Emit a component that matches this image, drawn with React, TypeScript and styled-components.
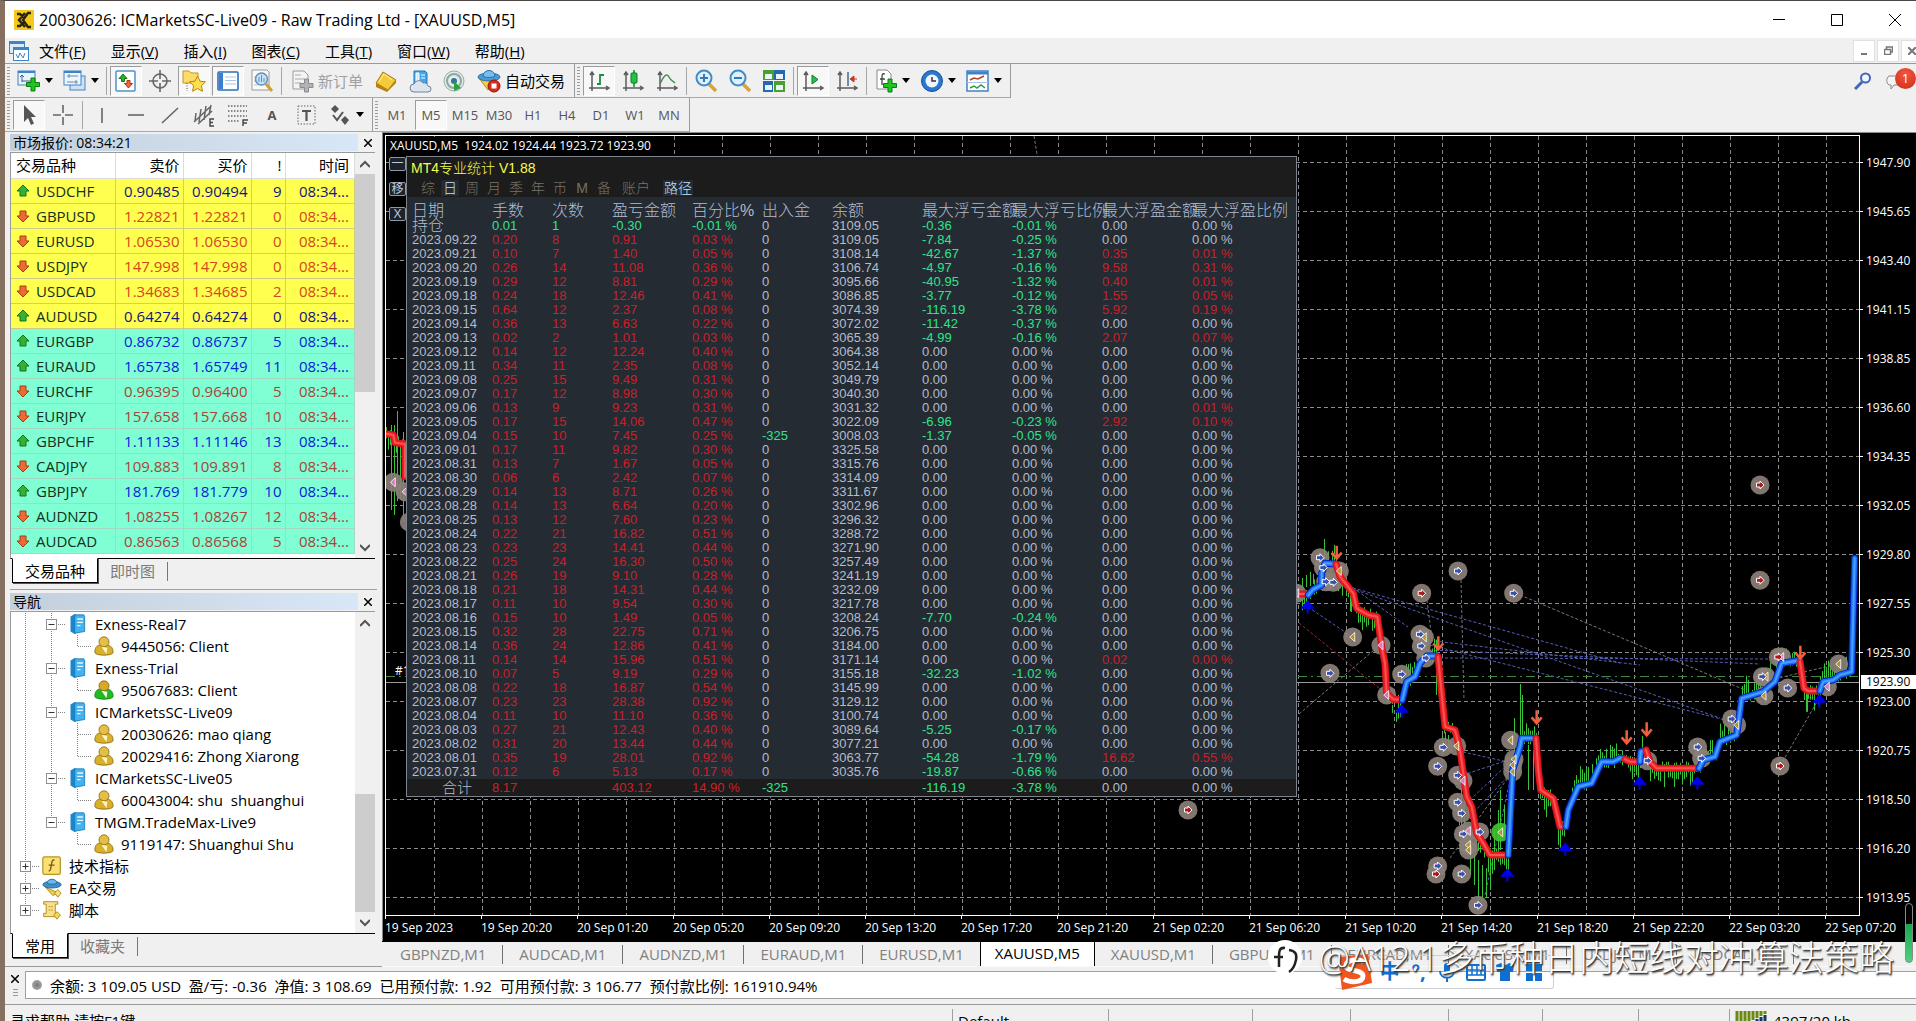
import React from "react";
import styled, { createGlobalStyle, css } from "styled-components";

const UI = `"Open Sans", "Noto Sans", "Noto Sans CJK SC", sans-serif`;
const PLAIN = `"Liberation Sans", "Noto Sans CJK SC", sans-serif`;

const Global = createGlobalStyle`
  *, *::before, *::after { box-sizing: border-box; }
  html, body { margin: 0; padding: 0; overflow: hidden; }
  body { font-family: ${UI}; font-size: 15px; color: #000; }
  button { font: inherit; color: inherit; background: none; border: 0; padding: 0; margin: 0; }
  a { color: inherit; text-decoration: none; }
  ul { list-style: none; margin: 0; padding: 0; }
  svg { display: block; flex: none; }
`;

/* ---------- window frame ---------- */

const Window = styled.div`
  position: relative;
  height: 100vh;
  display: flex;
  flex-direction: column;
  overflow: hidden;
  background: #f0f0f0;
  border-top: 1px solid #4a4646;
  border-left: 5px solid #86705f;
`;

const TitleBar = styled.header`
  flex: none;
  height: 37px;
  display: flex;
  align-items: center;
  background: #fff;
  padding-left: 9px;
`;

const Title = styled.h1`
  flex: 1;
  margin: 0 0 0 5px;
  font-size: 16px;
  font-weight: 400;
  line-height: 24px;
`;

const WindowButton = styled.button`
  width: 58px;
  height: 36px;
  display: grid;
  place-items: center;
`;

const WindowButtons = styled.div`
  display: flex;
  margin-right: -8px;
`;

const MenuBar = styled.nav`
  flex: none;
  height: 26px;
  display: flex;
  align-items: center;
  gap: 25px;
  padding-left: 4px;
  border-bottom: 1px solid #9a9a9a;
`;

const MenuLink = styled.a`
  line-height: 22px;
  white-space: nowrap;
  &:first-of-type { margin-left: -15px; }
`;

const ChildButtons = styled.div`
  margin-left: auto;
  display: flex;
  gap: 2px;
  margin-right: -7px;
`;

const ChildButton = styled.button`
  width: 22px;
  height: 22px;
  display: grid;
  place-items: center;
  background: #fff;
  border: 1px solid #e0e0e0;
`;

/* ---------- tool bars ---------- */

const ToolRow = styled.div`
  flex: none;
  height: 34px;
  display: flex;
  align-items: stretch;
`;

const ToolGroup = styled.div`
  display: flex;
  align-items: center;
  height: 34px;
  padding: 0 3px 0 1px;
  border-right: 1px solid #9a9a9a;
  border-bottom: 1px solid #a8a8a8;
`;

const Grip = styled.span`
  width: 3px;
  height: 28px;
  margin: 0 2px 0 1px;
  background: repeating-linear-gradient(#9c9c9c 0 1px, transparent 1px 3px);
`;

const Divider = styled.span`
  width: 1px;
  height: 28px;
  margin: 0 2px;
  background: #a6a6a6;
`;

const ToolButton = styled.button<{ $on?: boolean }>`
  width: 32px;
  height: 30px;
  margin: 0 1px;
  display: grid;
  place-items: center;
  font-size: 13px;
  color: #555;
  ${(p) =>
    p.$on &&
    css`
      background: #f8f8f8;
      border: 1px solid #fff;
      border-top-color: #9c9c9c;
      border-left-color: #9c9c9c;
    `}
`;

const DropButton = styled.button`
  width: 46px;
  height: 30px;
  display: flex;
  align-items: center;
  justify-content: center;
  gap: 4px;
`;

const Caret = styled.span`
  border: 4px solid transparent;
  border-top: 5px solid #000;
  border-bottom: 0;
`;

const TextButton = styled.button<{ $off?: boolean }>`
  height: 30px;
  padding: 0 6px;
  display: flex;
  align-items: center;
  gap: 4px;
  white-space: nowrap;
  color: ${(p) => (p.$off ? "#a0a0a0" : "#000")};
`;

const ToolEnd = styled.div`
  margin-left: auto;
  display: flex;
  align-items: center;
  gap: 14px;
`;

const Alert = styled.button`
  display: flex;
  align-items: center;
`;

const Count = styled.span`
  width: 21px;
  height: 21px;
  margin: -6px 0 0 -9px;
  border-radius: 50%;
  background: radial-gradient(circle at 50% 30%, #f0583e, #cf2a17);
  color: #fff;
  font-size: 13px;
  line-height: 21px;
  text-align: center;
`;

/* ---------- docked panels ---------- */

const Body = styled.div`
  flex: 1;
  min-height: 0;
  display: flex;
`;

const Dock = styled.aside`
  flex: none;
  width: 377px;
  display: flex;
  flex-direction: column;
  gap: 4px;
  padding: 2px 5px 6px;
  border-bottom: 1px solid #9a9a9a;
`;

const Panel = styled.section<{ $grow?: boolean }>`
  ${(p) => (p.$grow ? "flex: 1; min-height: 0;" : "flex: none; height: 451px;")}
  display: flex;
  flex-direction: column;
  & + & { border-top: 1px solid #a0a0a0; padding-top: 3px; }
`;

const PanelHead = styled.div`
  flex: none;
  height: 17px;
  display: flex;
  align-items: stretch;
  margin-bottom: 1px;
`;

const PanelTitle = styled.h2`
  flex: 1;
  margin: 0;
  padding-left: 3px;
  font-size: 14px;
  font-weight: 400;
  line-height: 17px;
  background: linear-gradient(90deg, #c3cfdb, #d8e7f7);
`;

const CloseButton = styled.button`
  width: 19px;
  display: grid;
  place-items: center;
`;

const PanelBody = styled.div`
  flex: 1;
  min-height: 0;
  display: flex;
  margin-right: 2px;
  background: #fff;
  border: 1px solid #9a9a9a;
  border-right: 0;
  border-bottom-color: #000;
`;

const PanelContent = styled.div`
  flex: 1;
  min-width: 0;
  overflow: hidden;
`;

const ScrollColumn = styled.div`
  width: 20px;
  flex: none;
  display: flex;
  flex-direction: column;
  background: #f0f0f0;
`;

const ScrollArrow = styled.button`
  height: 21px;
  display: grid;
  place-items: center;
`;

const Space = styled.div<{ $part: number; $thumb?: boolean }>`
  flex: ${(p) => p.$part};
  background: ${(p) => (p.$thumb ? "#cdcdcd" : "transparent")};
`;

const PanelTabs = styled.div`
  flex: none;
  height: 26px;
  display: flex;
  align-items: flex-start;
  padding-left: 2px;
`;

const PanelTab = styled.button<{ $on?: boolean }>`
  height: 25px;
  padding: 0 12px;
  line-height: 22px;
  color: ${(p) => (p.$on ? "#000" : "#7a7a7a")};
  ${(p) =>
    p.$on
      ? css`
          margin-top: -1px;
          background: #fff;
          border: 1px solid #000;
          border-top-color: #fff;
          box-shadow: 1px 1px 0 #555;
        `
      : css`
          height: 19px;
          margin-top: 3px;
          line-height: 17px;
          border-right: 1px solid #777;
        `}
`;

const Quotes = styled.table`
  width: 100%;
  border-collapse: collapse;
  table-layout: fixed;
  th, td {
    height: 25px;
    padding: 0 3px;
    line-height: 20px;
    text-align: right;
    font-weight: 400;
    white-space: nowrap;
    border-right: 1px solid #c6c6b0;
    border-bottom: 1px solid #c4c4a8;
  }
  th { border-color: #dcdcdc; }
  th:last-child, td:last-child { padding-right: 5px; }
  th:first-child, td:first-child { text-align: left; padding-left: 5px; }
`;

const QuoteRow = styled.tr<{ $up: boolean; $major: boolean }>`
  background: ${(p) => (p.$major ? "#ffff50" : "#80ffd4")};
  color: ${(p) => (p.$up ? (p.$major ? "#15157c" : "#0a22d8") : p.$major ? "#d2481c" : "#a8443a")};
  td { border-color: ${(p) => (p.$major ? "#cccc86" : "#a2d8c4")}; }
`;

const Symbol = styled.span`
  display: flex;
  align-items: center;
  gap: 6px;
  color: #14301c;
`;

const Tree = styled.ul`
  padding: 1px 0 0 2px;
`;

const TreeRow = styled.li`
  height: 22px;
  display: flex;
  align-items: center;
  white-space: pre;
`;

const TreeIcon = styled.span`
  width: 26px;
  display: grid;
  place-items: center;
`;

const TreeLabel = styled.a`
  padding-left: 4px;
  line-height: 22px;
`;

/* ---------- chart ---------- */

const Workspace = styled.main`
  flex: 1;
  min-width: 0;
  display: flex;
  flex-direction: column;
`;

const ChartWindow = styled.div`
  flex: 1;
  min-height: 0;
  display: grid;
  grid-template-columns: minmax(0, 1fr) 56px;
  grid-template-rows: minmax(0, 1fr) 25px;
  background: #000;
  color: #fff;
  padding: 2px 0 0 2px;
  border-top: 1px solid #8a8a8a;
  border-left: 1px solid #8a8a8a;
  font-size: 12px;
`;

const Plot = styled.div`
  position: relative;
  border: 1px solid #fff;
  overflow: hidden;
`;

const PlotCanvas = styled.svg`
  position: absolute;
  inset: 0;
  width: 100%;
  height: 100%;
`;

const PlotCaption = styled.div`
  position: absolute;
  left: 4px;
  top: 1px;
  line-height: 17px;
  white-space: pre;
  background: #000;
  font-size: 12px;
`;

const OrderTag = styled.span`
  position: absolute;
  left: 9px;
  top: 527px;
  line-height: 16px;
`;

const PriceAxis = styled.div`
  position: relative;
  min-height: 0;
  padding-top: 3px;
`;

const PriceTick = styled.div`
  height: 49px;
  line-height: 49px;
  padding-left: 6px;
  background: linear-gradient(#fff, #fff) 0 50% / 3px 1px no-repeat;
`;

const PriceNow = styled.div`
  position: absolute;
  left: 1px;
  right: 0;
  top: 540px;
  height: 14px;
  padding-left: 5px;
  line-height: 14px;
  color: #000;
  background: #fff;
`;

const TimeAxis = styled.div`
  grid-column: 1 / -1;
  display: flex;
  overflow: hidden;
`;

const TimeTick = styled.span`
  flex: none;
  width: 96px;
  line-height: 23px;
  background: linear-gradient(#fff, #fff) 0 0 / 1px 3px no-repeat;
`;

const ChartTabs = styled.div`
  flex: none;
  height: 26px;
  display: flex;
  align-items: center;
  padding-left: 2px;
  overflow: hidden;
  border-top: 1px solid #000;
  border-bottom: 1px solid #fafafa;
`;

const ChartTab = styled.button<{ $on?: boolean; $bare?: boolean }>`
  flex: none;
  padding: 0 16px;
  height: 19px;
  line-height: 19px;
  color: #808080;
  border-right: ${(p) => (p.$bare ? 0 : 1)}px solid #707070;
  ${(p) =>
    p.$on &&
    css`
      height: 25px;
      padding: 0 14px;
      line-height: 23px;
      color: #000;
      background: #fff;
      border: 1px solid #000;
      border-top: 0;
    `}
`;

/* ---------- statistics overlay ---------- */

const SideButtons = styled.div`
  position: absolute;
  left: 3px;
  top: 21px;
  display: flex;
  flex-direction: column;
  gap: 11px;
`;

const SideButton = styled.button`
  width: 17px;
  height: 14px;
  font-family: ${PLAIN};
  font-size: 12px;
  line-height: 11px;
  color: #c2cad8;
  background: #1d232b;
  border: 1px solid #8e97a6;
  border-radius: 2px;
`;

const Stats = styled.section`
  position: absolute;
  left: 20px;
  top: 20px;
  width: 891px;
  font-family: ${PLAIN};
  color: #b3bccd;
  background: #242b33;
  border: 1px solid #7e858e;
`;

const StatsHead = styled.div`
  height: 40px;
  padding: 1px 4px 0;
  background: #1c1c1c;
`;

const StatsTitle = styled.h3`
  margin: 0;
  font-size: 14px;
  font-weight: 300;
  line-height: 20px;
  color: #f2fb50;
`;

const StatsTabs = styled.div`
  display: flex;
  gap: 4px;
  padding: 2px 0 0 8px;
`;

const StatsTab = styled.button<{ $on?: boolean; $gap?: number }>`
  height: 16px;
  min-width: 18px;
  padding: 0 1px;
  margin-left: ${(p) => p.$gap ?? 0}px;
  font-size: 14px;
  font-weight: 300;
  line-height: 15px;
  color: ${(p) => (p.$on ? "#c9e0f2" : "#77736a")};
  background: ${(p) => (p.$on ? "#202b36" : "transparent")};
`;

const StatsTable = styled.table`
  width: 870px;
  margin-left: 5px;
  table-layout: fixed;
  border-collapse: collapse;
  th, td {
    padding: 0;
    height: 14px;
    line-height: 14px;
    font-size: 13px;
    font-weight: 400;
    text-align: left;
    white-space: nowrap;
  }
  thead th { height: 22px; line-height: 16px; padding-top: 6px; font-size: 16px; font-weight: 300; }
  tbody tr:first-child th { font-size: 16px; font-weight: 300; }
  tfoot td, tfoot th { height: 17px; line-height: 17px; }
  tfoot th { font-size: 15px; font-weight: 300; padding-left: 30px; }
  tfoot { background: #1c1c1c; box-shadow: -5px 0 0 #1c1c1c, 14px 0 0 #1c1c1c; }
`;

const Value = styled.td<{ $tone: "gain" | "loss" | "flat" }>`
  color: ${(p) => ({ gain: "#cc2029", loss: "#2fe48b", flat: "#b3bccd" })[p.$tone]};
`;

/* ---------- terminal and status ---------- */

const Terminal = styled.section`
  flex: none;
  height: 38px;
  display: flex;
  align-items: center;
  border-bottom: 1px solid #9a9a9a;
`;

const TerminalGrip = styled.div`
  width: 20px;
  display: flex;
  flex-direction: column;
  align-items: center;
  gap: 6px;
`;

const Balance = styled.p`
  flex: 1;
  align-self: stretch;
  display: flex;
  align-items: center;
  gap: 8px;
  margin: 4px 0 5px;
  padding-left: 6px;
  background: #fff;
  border: 1px solid #a0a0a0;
  border-right: 0;
  white-space: pre;
`;

const Dot = styled.span`
  width: 10px;
  height: 10px;
  border-radius: 50%;
  background: radial-gradient(#777, #bbb);
`;

const StatusBar = styled.footer`
  flex: none;
  height: 16px;
  display: flex;
  align-items: flex-start;
  overflow: hidden;
`;

const StatusCell = styled.div<{ $w?: number }>`
  flex: ${(p) => (p.$w ? `0 0 ${p.$w}px` : "1 1 0")};
  height: 30px;
  margin-top: 4px;
  padding-left: 5px;
  line-height: 25px;
  display: flex;
  gap: 6px;
  white-space: nowrap;
  & + & { border-left: 1px solid #a0a0a0; }
`;

const Watermark = styled.div`
  position: absolute;
  right: 22px;
  bottom: 39px;
  display: flex;
  align-items: center;
  gap: 14px;
  color: #fff;
  font-size: 35px;
  font-weight: 300;
  line-height: 48px;
  white-space: nowrap;
  text-shadow: 1px 1px 1px #333, 1px 2px 2px #555;
`;

const InputBar = styled.div`
  position: absolute;
  right: 362px;
  bottom: 32px;
  height: 34px;
  width: 219px;
  display: flex;
  align-items: center;
  justify-content: space-between;
  padding-right: 7px;
  color: #0d6fd0;
  border: 1px solid #ccd0d6;
  border-left: 0;
  border-radius: 3px;
`;

const InputKey = styled.button`
  width: 24px;
  font-size: 20px;
  font-weight: 700;
  line-height: 24px;
  display: grid;
  place-items: center;
`;

const LevelBar = styled.div`
  position: absolute;
  right: 3px;
  bottom: 58px;
  width: 8px;
  height: 60px;
  border: 1px solid #8a8a8a;
  border-radius: 4px;
  background: linear-gradient(transparent 34%, #17a84a 34%, #4fd080);
`;

/* ---------- icons ---------- */

const I = ({ children, s = 24 }: { children: React.ReactNode; s?: number }) => (
  <svg width={s} height={s} viewBox="0 0 24 24" fill="none" aria-hidden="true">
    {children}
  </svg>
);

const plus = (x: number, y: number, c = "#1fc41f", e = "#0a7d12") => (
  <path
    transform={`translate(${x} ${y})`}
    d="M4.500 0h4v4.500h4.500v4h-4.500v4.500h-4v-4.500H0v-4h4.500z"
    fill={c}
    stroke={e}
  />
);

const axes = <path d="M5 4v18M2 19h19M3 6l2-3 2 3M19 17l3 2-3 2" stroke="#5b5b5b" strokeWidth="1.500" />;

const icons: Record<string, React.ReactNode> = {
  newChart: (
    <I>
      <rect x="1" y="2" width="17" height="14" fill="#e8f3fd" stroke="#3f83c4" />
      <path d="M1 3h17" stroke="#3f83c4" strokeWidth="2" />
      <path d="M5 6v7M3 8l2-2 2 2M5 12h9" stroke="#49627c" />
      {plus(9.5, 9)}
    </I>
  ),
  profiles: (
    <I>
      <rect x="7" y="7" width="15" height="14" fill="#cfe2f5" stroke="#4583be" />
      <rect x="1" y="2" width="17" height="14" fill="#eef6fe" stroke="#3f83c4" />
      <path d="M1 3h17" stroke="#3f83c4" strokeWidth="2" />
      <path d="M4 7h11M6 5v4M4 13h11M13 11v4" stroke="#6d88a5" />
    </I>
  ),
  market: (
    <I>
      <rect x="2" y="2" width="19" height="20" rx="1" fill="#fff" stroke="#4f94cc" strokeWidth="1.500" />
      <path d="M9 5l4 4.500h-2.500v3h-3v-3H5z" fill="#2cb32c" stroke="#137a13" />
      <path d="M14.500 19l-4-4.500H13v-3h3v3h2.500z" fill="#f0663c" stroke="#b8330f" />
    </I>
  ),
  cross: (
    <I>
      <circle cx="12" cy="12" r="7" stroke="#666" strokeWidth="1.600" />
      <path d="M12 1v9M12 14v9M1 12h9M14 12h9" stroke="#666" strokeWidth="1.600" />
    </I>
  ),
  favorites: (
    <I>
      <path d="M1 2h6l2 2h7v10H1z" fill="#fbdc6b" stroke="#c79518" />
      <path d="M5 14v8" stroke="#555" strokeDasharray="1 1.500" />
      <path d="M15.500 7l2.500 5.200 5.500.6-4.100 3.900 1.100 5.600-5-2.800-4.900 2.800 1-5.600L7.500 12.800l5.500-.6z" fill="#ffdf50" stroke="#b98300" />
    </I>
  ),
  dataWindow: (
    <I>
      <rect x="2" y="3" width="20" height="18" rx="1" fill="#fff" stroke="#2d6fb8" strokeWidth="1.600" />
      <path d="M3 4h4v16H3z" fill="#3b7fd0" />
      <path d="M9 8h11M9 11.500h11M9 15h11" stroke="#a9c4e4" />
    </I>
  ),
  tester: (
    <I>
      <path d="M2 1h15l2 2v18H2z" fill="#fafafa" stroke="#999" />
      <path d="M4 8h3M4 12h2M4 16h4" stroke="#bbb" />
      <circle cx="11.500" cy="10" r="6" fill="#c9e2f6" stroke="#5c91c0" strokeWidth="1.500" />
      <path d="M9 13V8m2.500 5V6M14 13V9" stroke="#5c91c0" />
      <path d="M16 15l6 7" stroke="#d3a02c" strokeWidth="3" />
    </I>
  ),
  newOrder: (
    <I>
      <path d="M3 2h11l4 4v14H3z" fill="#f4f4f4" stroke="#9a9a9a" />
      <path d="M5 6h6M5 10h9M5 14h6" stroke="#ababab" />
      {plus(10, 10, "#b3b3b3", "#8a8a8a")}
    </I>
  ),
  gold: (
    <I>
      <path d="M2 14L9 3l13 8-8 10z" fill="#f4c93c" stroke="#a97808" />
      <path d="M2 14v4l11 5 1-2zM14 21l8-10v3l-9 9z" fill="#b97f10" />
      <path d="M5 13l5-8 8 6" stroke="#fff0a6" />
    </I>
  ),
  cloud: (
    <I>
      <path d="M6 2h11l2 2v11H6z" fill="#43a5ea" stroke="#1f78b8" />
      <path d="M8 4h3v8H8zM13 6h4M13 9h4" fill="#cdeafd" stroke="#fff" />
      <path d="M6 23a4 4 0 010-8 5 5 0 019-1 4 4 0 015 3 3 3 0 010 6z" fill="#dde4ee" stroke="#7482a0" />
    </I>
  ),
  signal: (
    <I>
      <circle cx="12" cy="12" r="10" fill="#e2ebe5" stroke="#9aa" />
      <circle cx="12" cy="12" r="7" stroke="#8aa8a2" strokeWidth="2" />
      <circle cx="12" cy="12" r="3" fill="#396f9e" />
      <path d="M12 12v10l7-3z" fill="#28a43a" />
    </I>
  ),
  auto: (
    <I>
      <path d="M2 9l9 12 8-9z" fill="#f6cf4c" stroke="#b88a14" />
      <ellipse cx="12" cy="8" rx="11" ry="4" fill="#4a9ad6" stroke="#2a6fa6" />
      <path d="M6 7a6 5.500 0 0112 0c-2 2-10 2-12 0z" fill="#77bdee" stroke="#2a6fa6" />
      <circle cx="17" cy="17" r="6" fill="#d92a1c" stroke="#981208" />
      <path d="M14.500 14.500h5v5h-5z" fill="#fff" />
    </I>
  ),
  bars: (
    <I>
      {axes}
      <path d="M13 5v11M10 15h3M13 6h4" stroke="#16913a" strokeWidth="1.800" />
    </I>
  ),
  candles: (
    <I>
      {axes}
      <path d="M13 1v17" stroke="#118a2c" strokeWidth="1.500" />
      <rect x="10" y="4" width="6" height="10" rx="1" fill="#25c045" stroke="#0e7a26" />
    </I>
  ),
  line: (
    <I>
      {axes}
      <path d="M5 15c4-9 7-11 9-7s4 4 6 6" stroke="#4d8d5a" strokeWidth="1.500" />
    </I>
  ),
  zoomIn: (
    <I>
      <path d="M15 15l7 7" stroke="#d9a72c" strokeWidth="3.500" />
      <circle cx="10" cy="9" r="7.500" fill="#dff0fd" stroke="#3f8cc8" strokeWidth="2" />
      <path d="M10 5v8M6 9h8" stroke="#3579b4" strokeWidth="2" />
    </I>
  ),
  zoomOut: (
    <I>
      <path d="M15 15l7 7" stroke="#d9a72c" strokeWidth="3.500" />
      <circle cx="10" cy="9" r="7.500" fill="#dff0fd" stroke="#3f8cc8" strokeWidth="2" />
      <path d="M6 9h8" stroke="#3579b4" strokeWidth="2" />
    </I>
  ),
  tiles: (
    <I>
      <path d="M1 1h11v10H1zM12 12h11v11H12z" fill="#4aa02c" />
      <path d="M12 1h11v10H12zM1 12h10v11H1z" fill="#2468b4" />
      <path d="M3 5h7v5H3zM14 5h7v5h-7zM3 16h7v5H3zM14 16h7v5h-7z" fill="#e8f3fb" />
    </I>
  ),
  scroll: (
    <I>
      {axes}
      <path d="M11 6v9l6-4.500z" fill="#2abf45" stroke="#0e7d24" />
    </I>
  ),
  shift: (
    <I>
      {axes}
      <path d="M13 3v14" stroke="#3d6d9c" strokeWidth="1.500" />
      <path d="M22 10h-5M19 7l-4 3 4 3z" fill="#c63a16" stroke="#c63a16" />
    </I>
  ),
  indicators: (
    <I>
      <path d="M3 1h10l4 4v15H3z" fill="#fff" stroke="#8a8a8a" />
      <path d="M11 5c-3-1-3 1-3 4v7M6 10h5" stroke="#444" strokeWidth="1.300" />
      {plus(9.5, 10)}
    </I>
  ),
  clock: (
    <I>
      <circle cx="12" cy="12" r="10.500" fill="#2a78d0" stroke="#15509a" />
      <circle cx="12" cy="12" r="6.500" fill="#eef6ff" />
      <path d="M12 8v4h4" stroke="#333" strokeWidth="1.500" />
    </I>
  ),
  template: (
    <I>
      <rect x="1" y="2" width="21" height="20" fill="#fff" stroke="#3f83c4" strokeWidth="1.500" />
      <path d="M1 4h21" stroke="#3f83c4" strokeWidth="3" />
      <path d="M4 11l4-2 4 1 6-3" stroke="#b0412a" strokeWidth="1.500" />
      <path d="M1 13.500h21" stroke="#a9c4e4" />
      <path d="M4 19l4-2 3 2 4-3 4 3" stroke="#2a9a42" strokeWidth="1.500" />
    </I>
  ),
  pointer: (
    <I>
      <path d="M7 2v17l4-4 3 7 3-1.500-3-6.500h5z" fill="#555" />
    </I>
  ),
  crosshair: (
    <I>
      <path d="M12 2v8M12 14v8M2 12h8M14 12h8" stroke="#666" strokeWidth="1.600" />
    </I>
  ),
  vline: <I><path d="M12 5v15" stroke="#666" strokeWidth="1.600" /></I>,
  hline: <I><path d="M4 12h16" stroke="#666" strokeWidth="1.600" /></I>,
  trend: <I><path d="M4 20L20 5" stroke="#666" strokeWidth="1.600" /></I>,
  channel: (
    <I>
      <path d="M2 19L18 4M6 21L20 8M4 10l-1 8M9 6L7 19M14 3l-2 14M19 2l-2 10" stroke="#666" strokeWidth="1.500" />
      <path d="M22 16h-4v7h4M18 19.500h3" stroke="#444" strokeWidth="1.400" />
    </I>
  ),
  fibo: (
    <I>
      <path d="M2 3h19M2 8h19M2 13h19M2 18h12" stroke="#666" strokeWidth="1.500" strokeDasharray="1.500 1.500" />
      <path d="M22 17h-5v6M17 20h4" stroke="#444" strokeWidth="1.400" />
    </I>
  ),
  label: (
    <I>
      <rect x="4" y="3" width="17" height="18" stroke="#666" strokeDasharray="1.500 1.500" />
      <path d="M8 8h9M12.500 8v10" stroke="#555" strokeWidth="2.200" />
    </I>
  ),
  arrows: (
    <I>
      <path d="M3 6l4-4 4 4-4 4zM13 17l4-4 4 4-4 5z" fill="#555" />
      <path d="M5 12l4 5 6-8" stroke="#555" strokeWidth="2" />
    </I>
  ),
  close: <svg width="8" height="8" viewBox="0 0 8 8"><path d="M0 0l8 8M8 0L0 8" stroke="#000" strokeWidth="1.500" /></svg>,
  up: <svg width="10" height="8" viewBox="0 0 10 8" fill="none"><path d="M0 7l5-5 5 5" stroke="#555" strokeWidth="2" /></svg>,
  down: <svg width="10" height="8" viewBox="0 0 10 8" fill="none"><path d="M0 1l5 5 5-5" stroke="#555" strokeWidth="2" /></svg>,
  server: (
    <I s={20}>
      <path d="M3 3l5-3 2 1v22l-2 1-5-3z" fill="#1b86cc" />
      <path d="M8 1h11l1 2v18l-12 2z" fill="#45b2f0" stroke="#1678b8" />
      <path d="M11 6h7M11 10h7M11 14h4" stroke="#e9f8ff" strokeWidth="1.600" />
    </I>
  ),
  user: (
    <I s={20}>
      <path d="M1 20c0-6 2-8 5-9h11c4 1 6 4 6 9-2 4-20 4-22 0z" fill="#d9b02c" stroke="#8c6a0c" />
      <circle cx="12" cy="7" r="6" fill="#e3bf48" stroke="#8c6a0c" />
      <path d="M9 13l6 9 1-8z" fill="#fff4c4" />
    </I>
  ),
  userLive: (
    <I s={20}>
      <path d="M1 20c0-6 2-8 5-9h11c4 1 6 4 6 9-2 4-20 4-22 0z" fill="#22b922" stroke="#0e7f12" />
      <circle cx="12" cy="7" r="6" fill="#d9a72c" stroke="#8c6a0c" />
      <path d="M9 13l6 9 1-8z" fill="#e8ffe0" />
    </I>
  ),
  func: (
    <I s={20}>
      <rect x="1" y="1" width="21" height="21" rx="2" fill="#f9df74" stroke="#b9952a" strokeWidth="1.500" />
      <path d="M15 5c-3-1-3 2-4 7s-1 6-3 6M8 11h7" stroke="#7b5a0c" strokeWidth="1.600" />
    </I>
  ),
  expert: (
    <I s={20}>
      <path d="M4 11l9 10 7-3z" fill="#f0cb4d" stroke="#a7800e" />
      <ellipse cx="12" cy="8" rx="11" ry="4" fill="#3d90cf" stroke="#245f92" />
      <path d="M6 6a6 4.500 0 0112 0c-2 2-10 2-12 0z" fill="#6fb7e8" stroke="#245f92" />
      <path d="M19 14l4 4-4 5-4-5z" fill="#f6e07a" stroke="#a7800e" />
    </I>
  ),
  script: (
    <I s={20}>
      <path d="M2 2h17v3h-3v11h3v4H2v-4h3V5H2z" fill="#f8e08a" stroke="#a7800e" />
      <path d="M8 8h5M8 12h5" stroke="#a7800e" strokeDasharray="2 1" />
      <path d="M18 14l4 4-4 5-4-5z" fill="#f6d84a" stroke="#a7800e" />
    </I>
  ),
};

const QuoteArrow = ({ up }: { up: boolean }) => (
  <svg width="14" height="14" viewBox="0 0 14 14">
    <path
      transform={up ? undefined : "rotate(180 7 7)"}
      d="M7 1l6 6h-3v5H4V7H1z"
      fill={up ? "#35b135" : "#ee6a34"}
      stroke={up ? "#157215" : "#a83a10"}
    />
  </svg>
);

/* ---------- data ---------- */

const menus = [["文件", "F"], ["显示", "V"], ["插入", "I"], ["图表", "C"], ["工具", "T"], ["窗口", "W"], ["帮助", "H"]];

const quotes: [string, string, string, string, boolean][] = [
  ["USDCHF", "0.90485", "0.90494", "9", true],
  ["GBPUSD", "1.22821", "1.22821", "0", false],
  ["EURUSD", "1.06530", "1.06530", "0", false],
  ["USDJPY", "147.998", "147.998", "0", false],
  ["USDCAD", "1.34683", "1.34685", "2", false],
  ["AUDUSD", "0.64274", "0.64274", "0", true],
  ["EURGBP", "0.86732", "0.86737", "5", true],
  ["EURAUD", "1.65738", "1.65749", "11", true],
  ["EURCHF", "0.96395", "0.96400", "5", false],
  ["EURJPY", "157.658", "157.668", "10", false],
  ["GBPCHF", "1.11133", "1.11146", "13", true],
  ["CADJPY", "109.883", "109.891", "8", false],
  ["GBPJPY", "181.769", "181.779", "10", true],
  ["AUDNZD", "1.08255", "1.08267", "12", false],
  ["AUDCAD", "0.86563", "0.86568", "5", false],
];

/* guides: v = line, e = last elbow, t = branch, m = minus box, M = last minus box, p = plus box */
const tree: [string, string, string][] = [
  ["vm", "server", "Exness-Real7"],
  ["vve", "user", "9445056: Client"],
  ["vm", "server", "Exness-Trial"],
  ["vve", "userLive", "95067683: Client"],
  ["vm", "server", "ICMarketsSC-Live09"],
  ["vvt", "user", "20030626: mao qiang"],
  ["vve", "user", "20029416: Zhong Xiarong"],
  ["vm", "server", "ICMarketsSC-Live05"],
  ["vve", "user", "60043004: shu  shuanghui"],
  ["vM", "server", "TMGM.TradeMax-Live9"],
  ["v e", "user", "9119147: Shuanghui Shu"],
  ["p", "func", "技术指标"],
  ["p", "expert", "EA交易"],
  ["P", "script", "脚本"],
];

const Guide = ({ kind }: { kind: string }) => {
  const box = "mMpP".includes(kind);
  const end = "eMP".includes(kind);
  const svg = (
    <svg width="26" height="22" viewBox="0 0 26 22" fill="none">
      {kind !== " " && <path d={end ? "M12.500 0v11" : "M12.500 0v22"} stroke="#808080" strokeDasharray="1 1" />}
      {kind !== "v" && kind !== " " && <path d="M13 11.500h13" stroke="#808080" strokeDasharray="1 1" />}
      {box && <rect x="7.500" y="6.500" width="10" height="10" fill="#fff" stroke="#919191" />}
      {box && <path d={kind.toLowerCase() === "p" ? "M9.500 11.500h6M12.500 8.500v6" : "M9.500 11.500h6"} stroke="#333" />}
    </svg>
  );
  return box ? <button aria-label="toggle">{svg}</button> : svg;
};

const prices = ["1947.90", "1945.65", "1943.40", "1941.15", "1938.85", "1936.60", "1934.35", "1932.05", "1929.80", "1927.55", "1925.30", "1923.00", "1920.75", "1918.50", "1916.20", "1913.95"];

const times = ["19 Sep 2023", "19 Sep 20:20", "20 Sep 01:20", "20 Sep 05:20", "20 Sep 09:20", "20 Sep 13:20", "20 Sep 17:20", "20 Sep 21:20", "21 Sep 02:20", "21 Sep 06:20", "21 Sep 10:20", "21 Sep 14:20", "21 Sep 18:20", "21 Sep 22:20", "22 Sep 03:20", "22 Sep 07:20"];

const statColumns: [string, number][] = [["日期", 80], ["手数", 60], ["次数", 60], ["盈亏金额", 80], ["百分比%", 70], ["出入金", 70], ["余额", 90], ["最大浮亏金额", 90], ["最大浮亏比例", 90], ["最大浮盈金额", 90], ["最大浮盈比例", 90]];

const statTabs: { name: string; on?: boolean; gap?: number }[] = [
  { name: "综" }, { name: "日", on: true }, { name: "周" }, { name: "月" }, { name: "季" }, { name: "年" },
  { name: "币" }, { name: "M" }, { name: "备" }, { name: "账户", gap: 4 }, { name: "路径", on: true, gap: 8 },
];

/* date, lots, trades, profit, percent, deposit, balance, then optional drawdown and run-up pairs */
const statRows = `持仓 0.01 1 -0.30 -0.01 0 3109.05 -0.36 -0.01
2023.09.22 0.20 8 0.91 0.03 0 3109.05 -7.84 -0.25
2023.09.21 0.10 7 1.40 0.05 0 3108.14 -42.67 -1.37 0.35 0.01
2023.09.20 0.26 14 11.08 0.36 0 3106.74 -4.97 -0.16 9.58 0.31
2023.09.19 0.29 12 8.81 0.29 0 3095.66 -40.95 -1.32 0.40 0.01
2023.09.18 0.24 18 12.46 0.41 0 3086.85 -3.77 -0.12 1.55 0.05
2023.09.15 0.64 12 2.37 0.08 0 3074.39 -116.19 -3.78 5.92 0.19
2023.09.14 0.36 13 6.63 0.22 0 3072.02 -11.42 -0.37
2023.09.13 0.02 2 1.01 0.03 0 3065.39 -4.99 -0.16 2.07 0.07
2023.09.12 0.14 12 12.24 0.40 0 3064.38
2023.09.11 0.34 11 2.35 0.08 0 3052.14
2023.09.08 0.25 15 9.49 0.31 0 3049.79
2023.09.07 0.17 12 8.98 0.30 0 3040.30
2023.09.06 0.13 9 9.23 0.31 0 3031.32 0.00 0.00 0.00 0.01
2023.09.05 0.17 15 14.06 0.47 0 3022.09 -6.96 -0.23 2.92 0.10
2023.09.04 0.15 10 7.45 0.25 -325 3008.03 -1.37 -0.05
2023.09.01 0.17 11 9.82 0.30 0 3325.58
2023.08.31 0.13 7 1.67 0.05 0 3315.76
2023.08.30 0.06 6 2.42 0.07 0 3314.09
2023.08.29 0.14 13 8.71 0.26 0 3311.67
2023.08.28 0.14 13 6.64 0.20 0 3302.96
2023.08.25 0.13 12 7.60 0.23 0 3296.32
2023.08.24 0.22 21 16.82 0.51 0 3288.72
2023.08.23 0.23 23 14.41 0.44 0 3271.90
2023.08.22 0.25 24 16.30 0.50 0 3257.49
2023.08.21 0.26 19 9.10 0.28 0 3241.19
2023.08.18 0.21 18 14.31 0.44 0 3232.09
2023.08.17 0.11 10 9.54 0.30 0 3217.78
2023.08.16 0.15 10 1.49 0.05 0 3208.24 -7.70 -0.24
2023.08.15 0.32 28 22.75 0.71 0 3206.75
2023.08.14 0.36 24 12.86 0.41 0 3184.00
2023.08.11 0.14 14 15.96 0.51 0 3171.14 0.00 0.00 0.02 0.00
2023.08.10 0.07 5 9.19 0.29 0 3155.18 -32.23 -1.02
2023.08.08 0.22 18 16.87 0.54 0 3145.99
2023.08.07 0.23 23 28.38 0.92 0 3129.12
2023.08.04 0.11 10 11.10 0.36 0 3100.74
2023.08.03 0.27 21 12.43 0.40 0 3089.64 -5.25 -0.17
2023.08.02 0.31 20 13.44 0.44 0 3077.21
2023.08.01 0.35 19 28.01 0.92 0 3063.77 -54.28 -1.79 16.62 0.55
2023.07.31 0.12 6 5.13 0.17 0 3035.76 -19.87 -0.66`
  .split("\n")
  .map((l) => l.split(" "));

const toneOf = (row: string[], i: number) => {
  const v = Number(row[i]);
  if (i === 6) return "flat";
  if (i < 5) return Number(row[3]) < 0 ? "loss" : "gain";
  if (v < 0) return "loss";
  if (i === 10 && Number(row[9]) > 0) return "gain";
  return v > 0 ? "gain" : "flat";
};

/* ---------- chart drawing ---------- */

type Pt = [number, number];
const from = (ox: number, oy: number) => (pts: Pt[]): Pt[] => pts.map(([x, y]) => [ox + x / 3, oy + y / 3]);
const mid = from(1290, 530);
const late = from(1600, 450);

const trends: { up: boolean; pts: Pt[] }[] = [
  { up: false, pts: from(380, 430)([[10, 10], [40, 15], [45, 38], [75, 42], [75, 140]]) },
  { up: false, pts: mid([[18, 192], [52, 192]]) },
  { up: true, pts: mid([[55, 195], [70, 178], [95, 165], [95, 130], [105, 100], [135, 102]]) },
  { up: false, pts: mid([[138, 102], [150, 140], [190, 190], [200, 235], [235, 255], [262, 260], [275, 350], [285, 400], [290, 490], [310, 508], [335, 510]]) },
  { up: true, pts: mid([[337, 510], [350, 455], [375, 440], [390, 400], [410, 378], [440, 378]]) },
  { up: false, pts: mid([[444, 380], [450, 440], [465, 590], [495, 600], [510, 660], [530, 800], [545, 830], [560, 910], [580, 940], [600, 975], [653, 975]]) },
  { up: true, pts: mid([[655, 975], [668, 720], [690, 650], [695, 625], [735, 625]]) },
  { up: false, pts: mid([[738, 625], [745, 720], [752, 780], [790, 805], [810, 890], [826, 890]]) },
  { up: true, pts: mid([[828, 890], [835, 840], [865, 770], [905, 760], [935, 695], [970, 695], [990, 685], [1000, 685]]) },
  { up: false, pts: late([[75, 928], [90, 935], [116, 935]]) },
  { up: true, pts: late([[120, 935], [122, 905], [130, 903]]) },
  { up: false, pts: late([[138, 900], [150, 935], [170, 955], [293, 955]]) },
  { up: true, pts: late([[297, 955], [310, 930], [345, 920], [360, 875], [410, 855], [425, 745], [490, 725], [525, 695], [545, 640], [592, 632]]) },
  { up: false, pts: late([[600, 635], [612, 715], [625, 723], [655, 723]]) },
  { up: true, pts: late([[660, 723], [670, 695], [700, 690], [720, 675], [755, 665], [764, 325]]) },
];

/* price bars scatter on the trailing side of each trend leg */
const bars: string[] = [];
trends.forEach(({ up, pts }, leg) => {
  for (let k = 1; k < pts.length; k++) {
    const [ax, ay] = pts[k - 1];
    const [bx, by] = pts[k];
    for (let x = Math.ceil(ax / 2) * 2; x < bx; x += 2) {
      const y = ay + ((by - ay) * (x - ax)) / Math.max(1, bx - ax);
      const r = Math.abs(Math.sin(x * 12.9898 + leg) * 43758.5) % 1;
      const q = Math.abs(Math.sin(x * 78.233) * 12543.7) % 1;
      const len = 6 + r * 18;
      const shift = up ? -len + q * 7 : -q * 7;
      bars.push(`M${x + 0.5} ${(y + shift).toFixed(1)}v${len.toFixed(1)}`);
    }
  }
});
const spikes = "M1324.500 539v24M1520.500 684v50M1522.500 695v45M1514.500 718v35M1500.500 790v60M1504.500 805v30M1498.500 810v50M1494.500 830v40M1508.500 835v35M1478.500 860v40M1482.500 865v36M1486.500 868v30M1474.500 855v30M1470.500 840v35M1467.500 825v30M1490.500 860v30M1558.500 820v25M1528.500 745v45M1533.500 750v40M1807.500 690v22M1804.500 680v20M1351.500 590v22M1362.500 608v22M1396.500 710v12M1392.500 705v8M1391.500 460v40M1393.500 450v60M1395.500 465v50M1464.500 800v50M1461.500 790v45M1459.500 800v25M1442.500 735v12M1445.500 732v14M1448.500 735v12M1436.500 650v45M1302.500 578v12M1306.500 575v12M1310.500 572v14M1313.500 574v10";
const earlyBars = "M1389.500 430v1M391.500 425v85M394.500 425v90M397.500 411v90M400.500 440v60M403.500 432v90";

type Mark = [number, number, "b" | "r" | "y" | "p" | "g"];
const marksMid: Mark[] = [[90, 83, "b"], [148, 123, "y"], [100, 113, "b"], [107, 155, "b"], [130, 157, "b"], [395, 190, "r"], [504, 123, "b"], [671, 190, "b"], [188, 321, "y"], [120, 430, "b"], [273, 346, "p"], [290, 495, "p"], [335, 433, "b"], [403, 322, "y"], [390, 313, "b"], [394, 348, "b"], [407, 384, "b"], [460, 652, "b"], [500, 648, "y"], [443, 709, "b"], [503, 736, "b"], [519, 752, "p"], [503, 817, "b"], [515, 850, "b"], [535, 903, "p"], [520, 912, "b"], [569, 906, "b"], [632, 907, "g"], [535, 945, "y"], [536, 960, "y"], [443, 1008, "b"], [438, 1032, "r"], [515, 1032, "b"], [564, 1126, "b"], [662, 631, "y"], [672, 688, "y"], [668, 705, "y"], [668, 725, "y"], [-306, 840, "r"], [20, 190, "p"]];
const marksLate: Mark[] = [[480, 105, "r"], [480, 391, "r"], [540, 948, "r"], [293, 891, "b"], [305, 925, "b"], [143, 932, "b"], [395, 807, "b"], [410, 825, "y"], [498, 680, "y"], [487, 680, "b"], [492, 737, "y"], [563, 714, "b"], [545, 621, "p"], [535, 621, "r"], [716, 642, "y"], [682, 710, "p"]];
const marksEarly: Mark[] = [[40, 157, "p"], [75, 185, "p"], [88, 276, "p"]];
const marks = [
  ...marksMid.map(([x, y, t]) => ({ x: 1290 + x / 3, y: 530 + y / 3, t })),
  ...marksLate.map(([x, y, t]) => ({ x: 1600 + x / 3, y: 450 + y / 3, t })),
  ...marksEarly.map(([x, y, t]) => ({ x: 380 + x / 3, y: 430 + y / 3, t })),
];

const sells: Pt[] = [...mid([[140, 68], [445, 340], [740, 562]]), ...late([[80, 862], [140, 838], [601, 608]])];
const buys: Pt[] = [...mid([[53, 230], [335, 542], [652, 1034], [826, 957]]), ...late([[119, 998], [292, 998], [658, 752]])];

const links: [Pt, Pt, string][] = [
  [[1353, 588], [1620, 663], "#5560b8"],
  [[1353, 588], [1408, 627], "#5560b8"],
  [[1356, 590], [1720, 718], "#5560b8"],
  [[1425, 640], [1640, 665], "#5560b8"],
  [[1430, 650], [1760, 664], "#5560b8"],
  [[1430, 658], [1770, 659], "#5560b8"],
  [[1430, 645], [1725, 720], "#5560b8"],
  [[1308, 607], [1345, 632], "#5560b8"],
  [[1299, 623], [1385, 693], "#9c2a30"],
  [[1299, 714], [1380, 645], "#777"],
  [[1520, 595], [1745, 690], "#777"],
  [[1461, 580], [1464, 700], "#777"],
  [[1427, 600], [1432, 640], "#777"],
  [[1463, 752], [1508, 762], "#5560b8"],
  [[1463, 775], [1508, 760], "#5560b8"],
  [[1470, 800], [1512, 760], "#5560b8"],
  [[1474, 812], [1514, 770], "#5560b8"],
  [[1450, 858], [1510, 775], "#777"],
  [[1485, 895], [1510, 780], "#5560b8"],
  [[1780, 766], [1818, 700], "#777"],
  [[1770, 680], [1838, 664], "#777"],
  [[1034, 136], [1038, 160], "#777"],
];

const Glyph = ({ t }: { t: string }) =>
  t === "b" || t === "r" ? (
    <path d="M-3.500 -2H0V-4L4 0L0 4V2H-3.500Z" fill={t === "b" ? "#3a4fb0" : "#b01818"} stroke="#fff" />
  ) : (
    <path d="M-3 0L2 -4.500V4.500Z" fill={t === "p" ? "#d67ac0" : "#b8922c"} stroke="#fff" strokeWidth=".8" />
  );

const line = (pts: Pt[]) => pts.map((p) => p.map((n) => n.toFixed(1)).join(",")).join(" ");

const ChartDrawing = () => (
  <PlotCanvas aria-hidden="true">
    <g transform="translate(-386 -136)" fill="none">
      <g stroke="#8c8c8c" strokeDasharray="4 3">
        {prices.map((p, i) => <path key={p} d={`M386 ${162.5 + 49 * i}H3000`} />)}
        {Array.from({ length: 50 }, (_, i) => <path key={i} d={`M${434.5 + 48 * i} 136V916`} />)}
      </g>
      <path d="M386 682.500H3000" stroke="#9a9a9a" />
      <path d="M386 676.500H3000" stroke="#3f8a3f" strokeDasharray="9 4 2 4" />
      {links.map(([a, b, c], i) => (
        <path key={i} d={`M${a[0]} ${a[1]}L${b[0]} ${b[1]}`} stroke={c} strokeDasharray="3 2" />
      ))}
      <path d={bars.join("") + spikes.replace("M1391.500 460v40M1393.500 450v60M1395.500 465v50", "") + earlyBars.replace("M1389.500 430v1", "")} stroke="#38c438" />
      {marks.map((m, i) => (
        <circle key={i} cx={m.x} cy={m.y} r="9.500" fill={m.t === "g" ? "#42c232" : "#8b8078"} fillOpacity=".92" />
      ))}
      {trends.map(({ up, pts }, i) => (
        <g key={i} strokeLinejoin="round" strokeLinecap="round">
          <polyline points={line(pts)} stroke={up ? "#0020c8" : "#d80f18"} strokeWidth="7" />
          <polyline points={line(pts)} stroke={up ? "#1f70f0" : "#e82028"} strokeWidth="5" />
          <polyline points={line(pts)} stroke={up ? "#45a0ff" : "#ff5050"} strokeWidth="2" />
        </g>
      ))}
      {marks.map((m, i) => (
        <g key={i} transform={`translate(${m.x.toFixed(1)} ${m.y.toFixed(1)})`}><Glyph t={m.t} /></g>
      ))}
      {sells.map(([x, y], i) => (
        <path key={i} transform={`translate(${x} ${y})`} d="M0 -7V5M-5 0L0 6L5 0" stroke="#f0603c" strokeWidth="2.500" />
      ))}
      {buys.map(([x, y], i) => (
        <path key={i} transform={`translate(${x} ${y})`} d="M0 7V-4M-5 1L0 -5L5 1Z" stroke="#0000e8" fill="#0000e8" strokeWidth="2" />
      ))}
    </g>
  </PlotCanvas>
);

/* ---------- composed parts ---------- */

const Tool = ({ name, on }: { name: string; on?: boolean }) => (
  <ToolButton $on={on} aria-label={name}>{icons[name]}</ToolButton>
);
const Drop = ({ name }: { name: string }) => (
  <DropButton aria-label={name}>{icons[name]}<Caret /></DropButton>
);

const Scroller = ({ parts }: { parts: [number, number, number] }) => (
  <ScrollColumn>
    <ScrollArrow aria-label="up">{icons.up}</ScrollArrow>
    <Space $part={parts[0]} />
    <Space $part={parts[1]} $thumb />
    <Space $part={parts[2]} />
    <ScrollArrow aria-label="down">{icons.down}</ScrollArrow>
  </ScrollColumn>
);

const StatsPanel = () => (
  <Stats>
    <StatsHead>
      <StatsTitle>MT4专业统计 V1.88</StatsTitle>
      <StatsTabs>
        {statTabs.map((t) => <StatsTab key={t.name} $on={t.on} $gap={t.gap}>{t.name}</StatsTab>)}
      </StatsTabs>
    </StatsHead>
    <StatsTable>
      <colgroup>{statColumns.map(([n, w]) => <col key={n} width={w} />)}</colgroup>
      <thead>
        <tr>{statColumns.map(([n]) => <th key={n}>{n}</th>)}</tr>
      </thead>
      <tbody>
        {statRows.map((short) => {
          const row = [...short, ..."0.00 0.00 0.00 0.00".split(" ").slice(short.length - 7)];
          return (
            <tr key={row[0]}>
              <th>{row[0]}</th>
              {row.slice(1).map((v, i) => (
                <Value key={i} $tone={toneOf(row, i + 1)}>{[4, 8, 10].includes(i + 1) ? `${v} %` : v}</Value>
              ))}
            </tr>
          );
        })}
      </tbody>
      <tfoot>
        <tr>
          <th>合计</th>
          <Value $tone="gain">8.17</Value>
          <td />
          <Value $tone="gain">403.12</Value>
          <Value $tone="gain">14.90 %</Value>
          <Value $tone="loss">-325</Value>
          <td />
          <Value $tone="loss">-116.19</Value>
          <Value $tone="loss">-3.78 %</Value>
          <Value $tone="flat">0.00</Value>
          <Value $tone="flat">0.00 %</Value>
        </tr>
      </tfoot>
    </StatsTable>
  </Stats>
);

const chartTabs = ["GBPNZD,M1", "AUDCAD,M1", "AUDNZD,M1", "EURAUD,M1", "EURUSD,M1", "XAUUSD,M5", "XAUUSD,M1", "GBPUSD,M1", "EURCAD,M1", "XAUUSD,M1", "USDJPY,M5", "USDCAD,H1"];

export default function App() {
  return (
    <Window>
      <Global />
      <TitleBar>
        <svg width="20" height="20" viewBox="0 0 20 20" fill="none">
          <rect width="20" height="20" fill="#f5c91c" />
          <path d="M3 4h3l4 4M3 16h3l4-4M17 3h-3l-5 7 5 7h3M11 3L5 10l6 7" stroke="#2b2412" strokeWidth="2.400" />
        </svg>
        <Title>20030626: ICMarketsSC-Live09 - Raw Trading Ltd - [XAUUSD,M5]</Title>
        <WindowButtons>
          <WindowButton aria-label="minimize"><svg width="12" height="12"><path d="M0 5.500h12" stroke="#000" /></svg></WindowButton>
          <WindowButton aria-label="maximize"><svg width="12" height="12"><path d="M.5.5h11v11H.5z" stroke="#000" fill="none" /></svg></WindowButton>
          <WindowButton aria-label="close"><svg width="12" height="12"><path d="M0 0l12 12M12 0L0 12" stroke="#000" /></svg></WindowButton>
        </WindowButtons>
      </TitleBar>
      <MenuBar>
        <svg width="20" height="20" viewBox="0 0 20 20" fill="none">
          <rect x=".5" y=".5" width="15" height="12" fill="#dcebfa" stroke="#3f83c4" />
          <path d="M0 2h16" stroke="#3f83c4" strokeWidth="2" />
          <rect x="4.500" y="6.500" width="15" height="13" fill="#fff" stroke="#3f83c4" />
          <path d="M4 8h16" stroke="#3f83c4" strokeWidth="2" />
          <path d="M7 13l2 4 2-5 3 5 2-5" stroke="#3f83c4" />
        </svg>
        {menus.map(([n, k]) => <MenuLink key={k} href="#">{n}(<u>{k}</u>)</MenuLink>)}
        <ChildButtons>
          <ChildButton aria-label="minimize chart"><svg width="8" height="10"><path d="M1 8h6" stroke="#777" strokeWidth="2" /></svg></ChildButton>
          <ChildButton aria-label="restore chart"><svg width="9" height="9" fill="none"><path d="M2.500 3V1h6v5H6M.5 3.500h6v5h-6z" stroke="#777" strokeWidth="1.500" /></svg></ChildButton>
          <ChildButton aria-label="close chart"><svg width="8" height="8"><path d="M0 0l8 8M8 0L0 8" stroke="#777" strokeWidth="2" /></svg></ChildButton>
        </ChildButtons>
      </MenuBar>
      <ToolRow>
        <ToolGroup>
          <Grip />
          <Drop name="newChart" /><Drop name="profiles" />
          <Divider />
          <Tool name="market" on /><Tool name="cross" /><Tool name="favorites" on /><Tool name="dataWindow" on /><Tool name="tester" />
          <Divider />
          <TextButton $off>{icons.newOrder}新订单</TextButton>
          <Tool name="gold" /><Tool name="cloud" /><Tool name="signal" />
          <TextButton>{icons.auto}自动交易</TextButton>
        </ToolGroup>
        <ToolGroup>
          <Grip />
          <Tool name="bars" on /><Tool name="candles" /><Tool name="line" />
          <Divider />
          <Tool name="zoomIn" /><Tool name="zoomOut" /><Tool name="tiles" />
          <Divider />
          <Tool name="scroll" on /><Tool name="shift" />
          <Divider />
          <Drop name="indicators" /><Drop name="clock" /><Drop name="template" />
        </ToolGroup>
        <ToolEnd>
          <button aria-label="search">
            <svg width="18" height="18" viewBox="0 0 18 18" fill="none">
              <path d="M1 17l7-7" stroke="#3f68b8" strokeWidth="3" />
              <circle cx="11.500" cy="6" r="4.500" fill="#f2f7ff" stroke="#3f68b8" strokeWidth="2" />
            </svg>
          </button>
          <Alert aria-label="messages">
            <svg width="18" height="18" viewBox="0 0 18 18"><path d="M3 4h12v9H8l-3 4v-4H3C0 11 0 6 3 4z" fill="#f4f4f4" stroke="#8a8a8a" /></svg>
            <Count>1</Count>
          </Alert>
        </ToolEnd>
      </ToolRow>
      <ToolRow>
        <ToolGroup>
          <Grip />
          <Tool name="pointer" on /><Tool name="crosshair" />
          <Divider />
          <Tool name="vline" /><Tool name="hline" /><Tool name="trend" /><Tool name="channel" /><Tool name="fibo" />
          <ToolButton><b>A</b></ToolButton>
          <Tool name="label" />
          <Drop name="arrows" />
        </ToolGroup>
        <ToolGroup>
          <Grip />
          {["M1", "M5", "M15", "M30", "H1", "H4", "D1", "W1", "MN"].map((t) => <ToolButton key={t} $on={t === "M5"}>{t}</ToolButton>)}
        </ToolGroup>
      </ToolRow>

      <Body>
        <Dock>
          <Panel>
            <PanelHead>
              <PanelTitle>市场报价: 08:34:21</PanelTitle>
              <CloseButton aria-label="close">{icons.close}</CloseButton>
            </PanelHead>
            <PanelBody>
              <PanelContent>
                <Quotes>
                  <colgroup><col width="104" /><col width="68" /><col width="68" /><col width="34" /><col /></colgroup>
                  <thead><tr><th>交易品种</th><th>卖价</th><th>买价</th><th>!</th><th>时间</th></tr></thead>
                  <tbody>
                    {quotes.map(([s, bid, ask, spread, up], i) => (
                      <QuoteRow key={s} $up={up} $major={i < 6}>
                        <td><Symbol><QuoteArrow up={up} />{s}</Symbol></td>
                        <td>{bid}</td><td>{ask}</td><td>{spread}</td><td>08:34...</td>
                      </QuoteRow>
                    ))}
                  </tbody>
                </Quotes>
              </PanelContent>
              <Scroller parts={[0, 218, 145]} />
            </PanelBody>
            <PanelTabs><PanelTab $on>交易品种</PanelTab><PanelTab>即时图</PanelTab></PanelTabs>
          </Panel>
          <Panel $grow>
            <PanelHead>
              <PanelTitle>导航</PanelTitle>
              <CloseButton aria-label="close">{icons.close}</CloseButton>
            </PanelHead>
            <PanelBody>
              <PanelContent>
                <Tree>
                  {tree.map(([guides, icon, label]) => (
                    <TreeRow key={label}>
                      {guides.split("").map((g, i) => <Guide key={i} kind={g} />)}
                      <TreeIcon>{icons[icon]}</TreeIcon>
                      <TreeLabel href="#">{label}</TreeLabel>
                    </TreeRow>
                  ))}
                </Tree>
              </PanelContent>
              <Scroller parts={[162, 118, 0]} />
            </PanelBody>
            <PanelTabs><PanelTab $on>常用</PanelTab><PanelTab>收藏夹</PanelTab></PanelTabs>
          </Panel>
        </Dock>

        <Workspace>
          <ChartWindow>
            <Plot>
              <ChartDrawing />
              <PlotCaption>XAUUSD,M5  1924.02 1924.44 1923.72 1923.90</PlotCaption>
              <OrderTag>#1</OrderTag>
              <SideButtons><SideButton>一</SideButton><SideButton>移</SideButton><SideButton>X</SideButton></SideButtons>
              <StatsPanel />
            </Plot>
            <PriceAxis>
              {prices.map((p) => <PriceTick key={p}>{p}</PriceTick>)}
              <PriceNow>1923.90</PriceNow>
            </PriceAxis>
            <TimeAxis>{times.map((t) => <TimeTick key={t}>{t}</TimeTick>)}</TimeAxis>
          </ChartWindow>
          <ChartTabs>
            {chartTabs.map((t, i) => <ChartTab key={i} $on={i === 5} $bare={i === 4}>{t}</ChartTab>)}
          </ChartTabs>
        </Workspace>
      </Body>

      <Terminal>
        <TerminalGrip>
          {icons.close}
          <svg width="5" height="8"><path d="M0 .5h5M0 3.500h5M0 6.500h5" stroke="#999" /></svg>
        </TerminalGrip>
        <Balance><Dot />余额: 3 109.05 USD  盈/亏: -0.36  净值: 3 108.69  已用预付款: 1.92  可用预付款: 3 106.77  预付款比例: 161910.94%</Balance>
      </Terminal>
      <StatusBar>
        <StatusCell>寻求帮助,请按F1键</StatusCell>
        <StatusCell $w={156}>Default</StatusCell>
        <StatusCell $w={144} /><StatusCell $w={98} /><StatusCell $w={98} /><StatusCell $w={94} /><StatusCell $w={96} /><StatusCell $w={91} />
        <StatusCell $w={187}>
          <svg width="32" height="20"><path d="M2 2v18M6 2v18M10 2v18M14 2v18M18 2v9M22 2v7M26 2v5M30 2v3" stroke="#6b8a14" strokeWidth="3" /><path d="M18 12v8M22 10v10M26 8v12M30 6v14" stroke="#123a5c" strokeWidth="3" /></svg>
          4397/20 kb
        </StatusCell>
      </StatusBar>

      <InputBar>
        <svg width="38" height="38" viewBox="0 0 38 38" fill="none">
          <path d="M3 4l30-3 4 29-30 7z" fill="#f0561e" />
          <path d="M29 9c-7-4-18-2-18 4s17 3 17 10-13 7-19 3" stroke="#fff" strokeWidth="5" />
        </svg>
        <InputKey>中</InputKey>
        <InputKey>°,</InputKey>
        <InputKey aria-label="voice">
          <I><rect x="9" y="3" width="6" height="11" rx="3" fill="#0d6fd0" /><path d="M5 11c0 9 14 9 14 0M12 18v4" stroke="#0d6fd0" strokeWidth="2" /></I>
        </InputKey>
        <InputKey aria-label="keyboard">
          <I><rect x="3" y="5" width="18" height="15" rx="1" stroke="#0d6fd0" strokeWidth="2" /><path d="M3 10h18M3 15h18M8 5v10M13 5v10M17 5v10" stroke="#0d6fd0" strokeWidth="1.500" /></I>
        </InputKey>
        <InputKey aria-label="skin"><I><path d="M3 5l5-2q4 4 8 0l5 2-1 7h-3v9H7v-9H4z" fill="#0d6fd0" /></I></InputKey>
        <InputKey aria-label="tools">
          <I><path d="M4 4h7v7H4zM13 4h7v7h-7zM4 13h7v8H4zM13 13h7v8h-7z" fill="#0d6fd0" /></I>
        </InputKey>
      </InputBar>
      <Watermark>
        <svg width="38" height="40" viewBox="0 0 38 40" fill="none">
          <circle cx="18" cy="19" r="17" fill="#fff" />
          <path d="M18 10c-6-1-6 4-6 9v10M7 19h9M22 12q9 1 7 10t-7 12" stroke="#222" strokeWidth="2.500" />
        </svg>
        <span>@A12.1多币种日内短线对冲算法策略</span>
      </Watermark>
      <LevelBar />
    </Window>
  );
}
